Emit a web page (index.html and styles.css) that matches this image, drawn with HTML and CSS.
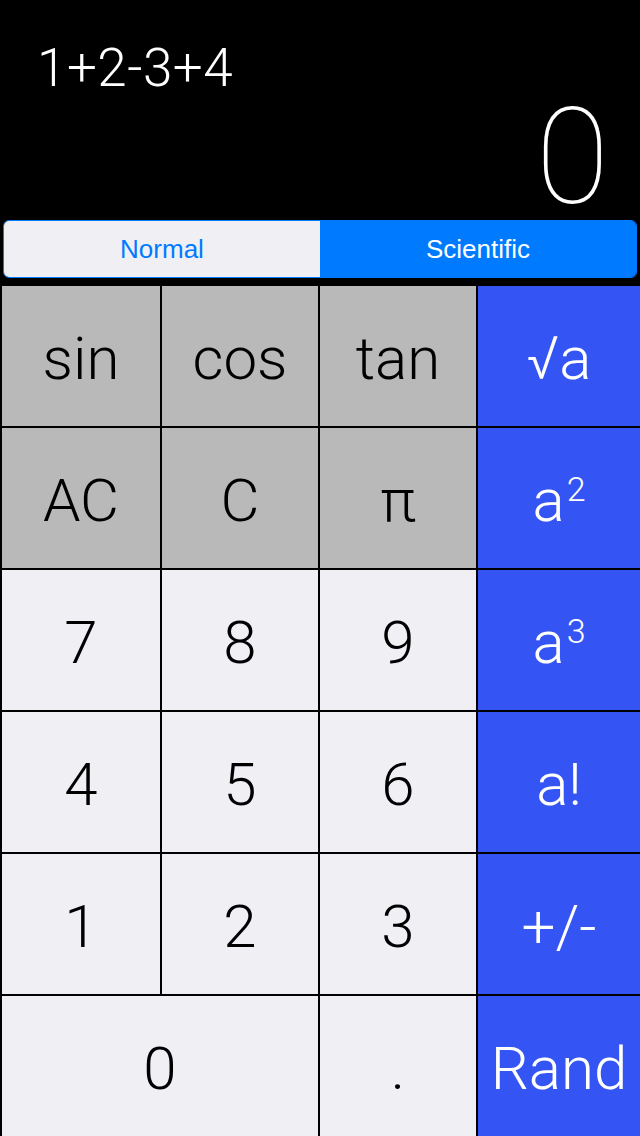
FILE: index.html
```html
<!DOCTYPE html>
<html>
<head>
<meta charset="utf-8">
<link rel="stylesheet" href="styles.css">
</head>
<body>
<div class="app">
  <div class="display">
    <div class="expr">1+2-3+4</div>
    <div class="result">0</div>
  </div>
  <div class="segmented">
    <div class="seg seg-off">Normal</div>
    <div class="seg seg-on">Scientific</div>
  </div>
  <div class="keys">
    <div class="key fn"><span>sin</span></div>
    <div class="key fn"><span>cos</span></div>
    <div class="key fn"><span>tan</span></div>
    <div class="key op"><span>√a</span></div>
    <div class="key fn"><span>AC</span></div>
    <div class="key fn"><span>C</span></div>
    <div class="key fn"><span>π</span></div>
    <div class="key op"><span class="pow">a<sup class="sup">2</sup></span></div>
    <div class="key num"><span>7</span></div>
    <div class="key num"><span>8</span></div>
    <div class="key num"><span>9</span></div>
    <div class="key op"><span class="pow">a<sup class="sup">3</sup></span></div>
    <div class="key num"><span>4</span></div>
    <div class="key num"><span>5</span></div>
    <div class="key num"><span>6</span></div>
    <div class="key op"><span>a!</span></div>
    <div class="key num"><span>1</span></div>
    <div class="key num"><span>2</span></div>
    <div class="key num"><span>3</span></div>
    <div class="key op"><span>+/-</span></div>
    <div class="key num zero"><span>0</span></div>
    <div class="key num"><span>.</span></div>
    <div class="key op"><span>Rand</span></div>
  </div>
</div>
</body>
</html>
```
FILE: styles.css
```css
html, body {
  margin: 0;
  padding: 0;
  background: #000;
}
.app {
  width: 640px;
  height: 1136px;
  background: #000;
  display: flex;
  flex-direction: column;
  overflow: hidden;
}
.display {
  height: 220px;
  box-sizing: border-box;
  padding-top: 42px;
  color: #fff;
  font-family: Roboto, "Liberation Sans", sans-serif;
}
.expr {
  font-size: 53px;
  font-weight: 300;
  line-height: 53px;
  padding-left: 37px;
  letter-spacing: 0.5px;
}
.result {
  margin-top: 3px;
  font-size: 134px;
  font-weight: 100;
  line-height: 120px;
  text-align: right;
  padding-right: 31px;
}
.segmented {
  margin: 0 3px;
  height: 58px;
  box-sizing: border-box;
  border: 1px solid #007aff;
  border-radius: 6px;
  overflow: hidden;
  display: flex;
  font-family: "Liberation Sans", Arial, sans-serif;
  font-size: 26px;
}
.seg {
  flex: 1;
  display: flex;
  align-items: center;
  justify-content: center;
}
.seg-off {
  background: #efeff4;
  color: #007aff;
}
.seg-on {
  background: #007aff;
  color: #fff;
}
.keys {
  margin-top: 8px;
  padding-left: 2px;
  display: grid;
  grid-template-columns: 158px 156px 156px 162px;
  grid-auto-rows: 140px;
  gap: 2px;
  font-family: Roboto, "Liberation Sans", sans-serif;
  font-weight: 300;
  font-size: 60px;
}
.key {
  display: flex;
  align-items: center;
  justify-content: center;
  line-height: 1;
  padding-top: 6px;
  box-sizing: border-box;
}
.fn {
  background: #b9b9b9;
  color: #000;
}
.num {
  background: #efeff4;
  color: #000;
}
.op {
  background: #3455f3;
  color: #fff;
}
.zero {
  grid-column: span 2;
}
.pow {
  display: inline-block;
}
.sup {
  font-size: 34px;
  line-height: 0;
  vertical-align: 20px;
  margin-left: 2px;
}
```
